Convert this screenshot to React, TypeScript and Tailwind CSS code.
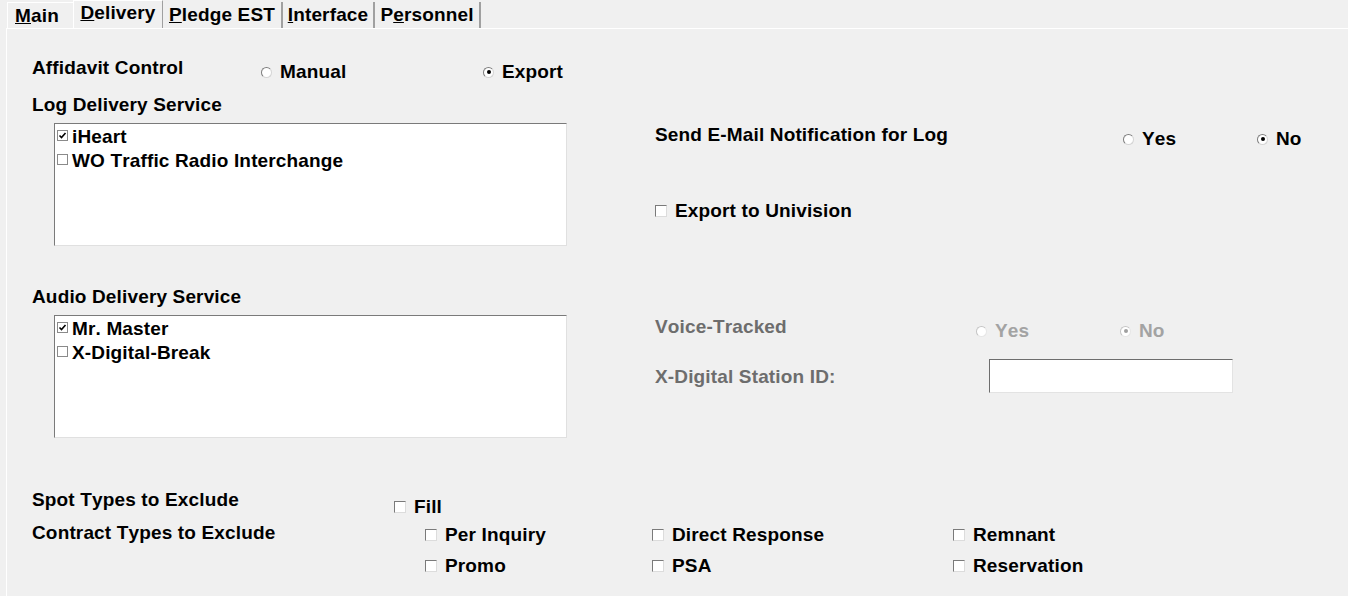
import React from "react";

const font = { fontFamily: '"Liberation Sans", Arial, sans-serif' };

function Radio({ checked, disabled }: { checked?: boolean; disabled?: boolean }) {
  return (
    <span
      className={
        "inline-flex items-center justify-center w-[11px] h-[11px] rounded-full border bg-white shrink-0 " +
        (disabled
          ? "border-t-[#c4c4c4] border-l-[#c4c4c4] border-b-[#e6e6e6] border-r-[#e6e6e6] bg-[#f4f4f4]"
          : "border-t-[#7d7d7d] border-l-[#7d7d7d] border-b-[#d4d4d4] border-r-[#d4d4d4]")
      }
    >
      {checked && (
        <span className={"w-[4px] h-[4px] rounded-full " + (disabled ? "bg-[#a0a0a0]" : "bg-black")} />
      )}
    </span>
  );
}

function RadioItem({
  label,
  checked,
  disabled,
  w,
}: {
  label: string;
  checked?: boolean;
  disabled?: boolean;
  w?: string;
}) {
  return (
    <div className={"flex items-center gap-[8px] " + (w ?? "")}>
      <Radio checked={checked} disabled={disabled} />
      <span className={disabled ? "text-[#a3a3a3]" : "text-black"}>{label}</span>
    </div>
  );
}

function Check({ label, w }: { label: string; w?: string }) {
  return (
    <div className={"flex items-center gap-[8px] h-[24px] " + (w ?? "")}>
      <span className="w-[12px] h-[12px] bg-white border border-t-[#7a7a7a] border-l-[#7a7a7a] border-b-[#dcdcdc] border-r-[#dcdcdc] shrink-0" />
      <span>{label}</span>
    </div>
  );
}

function ListItem({ label, checked }: { label: string; checked?: boolean }) {
  return (
    <div className="flex items-start h-[24px] pl-[2px] gap-[4px]">
      <span className="mt-[6px] w-[11px] h-[11px] border border-[#8a8a8a] bg-white flex items-center justify-center shrink-0">
        {checked && (
          <svg width="9" height="9" viewBox="0 0 9 9">
            <path d="M1.5 4.5 L3.5 6.5 L7.5 2" stroke="#000" strokeWidth="1.6" fill="none" />
          </svg>
        )}
      </span>
      <span className="pt-[1px]">{label}</span>
    </div>
  );
}

function ListBox({ items }: { items: { label: string; checked?: boolean }[] }) {
  return (
    <div className="w-[513px] h-[123px] bg-white border border-t-[#7a7a7a] border-l-[#7a7a7a] border-b-[#e0e0e0] border-r-[#e0e0e0] shrink-0 overflow-hidden">
      {items.map((it) => (
        <ListItem key={it.label} label={it.label} checked={it.checked} />
      ))}
    </div>
  );
}

function Tab({
  children,
  w,
  selected,
  first,
}: {
  children: React.ReactNode;
  w: string;
  selected?: boolean;
  first?: boolean;
}) {
  if (selected) {
    return (
      <div
        className={
          "h-[28px] leading-[22px] flex items-start pt-[1px] justify-center border-t border-l border-white border-r border-r-[#a0a0a0] bg-[#f0f0f0] " +
          w
        }
      >
        {children}
      </div>
    );
  }
  return (
    <div
      className={
        "h-[26px] leading-[22px] flex items-center " +
        (first
          ? "border-t border-l border-white pl-[7px] "
          : "border-r-2 border-r-[#a0a0a0] justify-center ") +
        w
      }
    >
      {children}
    </div>
  );
}

export default function App() {
  return (
    <div
      className="w-[1348px] h-[596px] bg-[#f0f0f0] overflow-hidden text-[19px] leading-[24px] tracking-[0.15px] [font-kerning:none] font-bold text-black"
      style={font}
    >
      {/* tab strip */}
      <div className="h-[28px] flex items-end pl-[7px]">
        <Tab w="w-[66px]" first>
          <span>
            <u>M</u>ain
          </span>
        </Tab>
        <Tab w="w-[90px]" selected>
          <span>
            <u>D</u>elivery
          </span>
        </Tab>
        <Tab w="w-[120px]">
          <span>
            <u>P</u>ledge EST
          </span>
        </Tab>
        <Tab w="w-[92px]">
          <span>
            <u>I</u>nterface
          </span>
        </Tab>
        <Tab w="w-[106px]">
          <span>
            P<u>e</u>rsonnel
          </span>
        </Tab>
      </div>

      {/* panel */}
      <div className="ml-[6px] h-[568px] border-t border-l border-white pl-[25px]">
        {/* Affidavit row */}
        <div className="mt-[27px] h-[37px] flex items-start">
          <div className="w-[229px]">Affidavit Control</div>
          <div className="flex pt-[4px]">
            <RadioItem label="Manual" w="w-[222px]" />
            <RadioItem label="Export" checked />
          </div>
        </div>

        <div className="h-[30px]">Log Delivery Service</div>

        {/* log listbox + right */}
        <div className="flex">
          <div className="ml-[22px]">
            <ListBox
              items={[
                { label: "iHeart", checked: true },
                { label: "WO Traffic Radio Interchange" },
              ]}
            />
          </div>
          <div className="ml-[88px] flex flex-col">
            <div className="h-[76px] flex items-start">
              <div className="w-[468px]">Send E-Mail Notification for Log</div>
              <div className="flex pt-[4px]">
                <RadioItem label="Yes" w="w-[134px]" />
                <RadioItem label="No" checked />
              </div>
            </div>
            <Check label="Export to Univision" />
          </div>
        </div>

        <div className="mt-[39px] h-[30px]">Audio Delivery Service</div>

        {/* audio listbox + right */}
        <div className="flex">
          <div className="ml-[22px]">
            <ListBox
              items={[
                { label: "Mr. Master", checked: true },
                { label: "X-Digital-Break" },
              ]}
            />
          </div>
          <div className="ml-[88px] flex flex-col">
            <div className="h-[44px] flex items-start">
              <div className="w-[321px] text-[#6d6d6d]">Voice-Tracked</div>
              <div className="flex pt-[4px]">
                <RadioItem label="Yes" w="w-[144px]" disabled />
                <RadioItem label="No" checked disabled />
              </div>
            </div>
            <div className="flex items-center h-[34px]">
              <div className="w-[334px] text-[#6d6d6d] pt-[1px]">X-Digital Station ID:</div>
              <div className="w-[244px] h-[34px] bg-white border border-t-[#6d6d6d] border-l-[#6d6d6d] border-b-[#e3e3e3] border-r-[#e3e3e3]" />
            </div>
          </div>
        </div>

        {/* spot types */}
        <div className="mt-[50px] h-[33px] flex items-start">
          <div className="w-[362px]">Spot Types to Exclude</div>
          <div className="pt-[7px]">
            <Check label="Fill" />
          </div>
        </div>

        <div className="flex items-start">
          <div className="w-[393px]">Contract Types to Exclude</div>
          <div className="pt-[2px] grid grid-cols-[227px_301px_200px] gap-y-[7px]">
            <Check label="Per Inquiry" />
            <Check label="Direct Response" />
            <Check label="Remnant" />
            <Check label="Promo" />
            <Check label="PSA" />
            <Check label="Reservation" />
          </div>
        </div>
      </div>
    </div>
  );
}
